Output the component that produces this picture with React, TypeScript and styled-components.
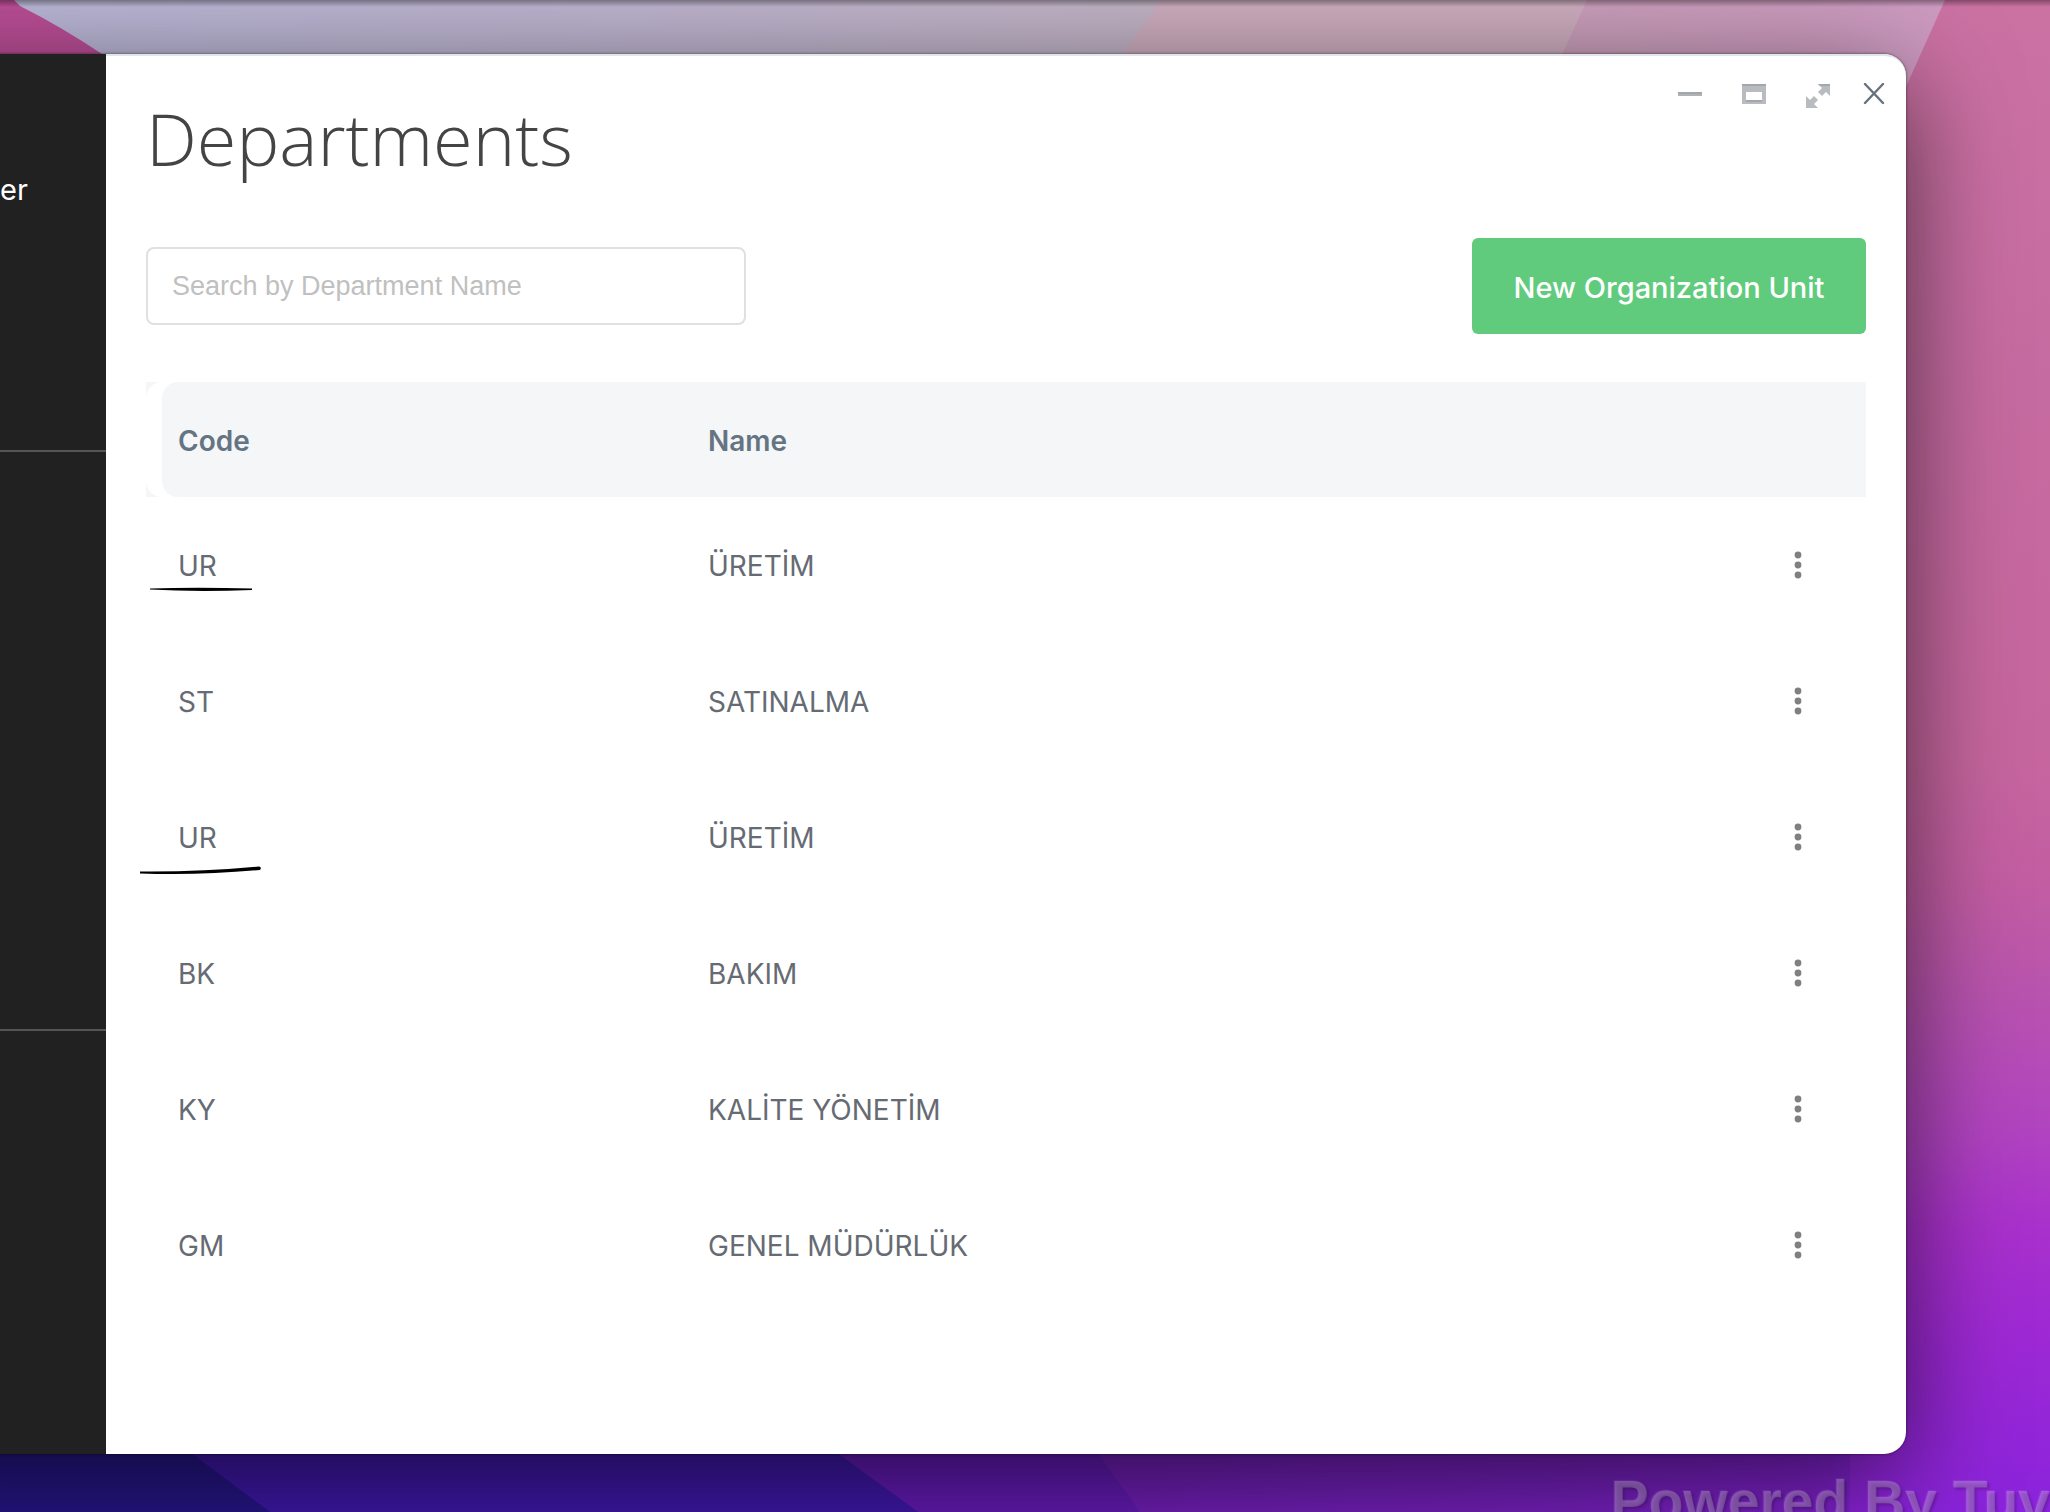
import React, { useState } from "react";
import styled, { createGlobalStyle } from "styled-components";

const GlobalStyle = createGlobalStyle`
  *, *::before, *::after { box-sizing: border-box; }
  body { margin: 0; font-family: Inter, "Open Sans", sans-serif; background: #4f189c; }
  button, input { font-family: inherit; }
`;

const Desktop = styled.div`
  position: relative;
  display: flex;
  flex-direction: column;
  min-height: 100vh;
  padding-top: 54px;
  overflow: hidden;
  isolation: isolate;
`;

const Wallpaper = styled.svg`
  position: absolute;
  inset: 0;
  z-index: -1;
  width: 100%;
  height: 100%;
`;

const AppWindow = styled.div`
  display: flex;
  flex: 1;
  margin: 0 144px 0 -120px;
  border-radius: 0 22px 22px 0;
  background: #ffffff;
  box-shadow: 0 0 3px rgba(0, 0, 0, 0.55), 0 28px 108px rgba(0, 0, 0, 0.62);
`;

const Sidebar = styled.aside`
  flex: none;
  width: 226px;
  background: #212121;
`;

const SidebarSection = styled.div<{ $height: number }>`
  height: ${(p) => p.$height}px;
  padding: 116px 0 0 120px;
  border-bottom: 2px solid #555558;
`;

const SidebarLabel = styled.span`
  display: block;
  color: #ffffff;
  font-size: 29px;
  line-height: 40px;
`;

const Main = styled.main`
  display: flex;
  flex: 1;
  flex-direction: column;
  min-width: 0;
  border-top: 2px solid #dfe6ec;
  border-radius: 0 22px 22px 0;
`;

const Header = styled.header`
  display: flex;
  align-items: flex-start;
  justify-content: space-between;
  padding: 10px 8px 0 40px;
`;

const Title = styled.h1`
  margin: 28px 0 0;
  color: #444444;
  font-family: "Open Sans", Lato, sans-serif;
  font-size: 72px;
  font-weight: 300;
  line-height: 88px;
`;

const WindowControls = styled.div`
  display: flex;
`;

const ControlButton = styled.button<{ $width: number }>`
  display: flex;
  align-items: center;
  justify-content: center;
  width: ${(p) => p.$width}px;
  height: 56px;
  padding: 0;
  border: 0;
  background: none;
  cursor: pointer;
`;

const Toolbar = styled.div`
  display: flex;
  align-items: center;
  justify-content: space-between;
  margin: 56px 40px 48px;
`;

const SearchInput = styled.input`
  width: 600px;
  height: 78px;
  padding: 0 24px;
  border: 2px solid #e0e0e0;
  border-radius: 8px;
  background: #ffffff;
  color: #444444;
  font-family: "Liberation Sans", sans-serif;
  font-size: 27px;

  &::placeholder {
    color: #c0c0c0;
    opacity: 1;
  }
`;

const PrimaryButton = styled.button`
  min-width: 394px;
  height: 96px;
  padding: 2px 40px 0;
  border: 0;
  border-radius: 6px;
  background: #61cb7d;
  color: #ffffff;
  font-size: 29px;
  font-weight: 500;
  cursor: pointer;
`;

const TableArea = styled.div`
  padding: 0 40px;
`;

const Table = styled.table`
  width: 100%;
  border-spacing: 0;
  table-layout: fixed;
  color: #666b73;
  font-size: 28px;
  text-align: left;
`;

const CodeCol = styled.col`
  width: 546px;
`;

const ActionCol = styled.col`
  width: 136px;
`;

const HeadCell = styled.th`
  height: 115px;
  padding: 2px 16px 0;
  background: #f4f6f8;
  color: #647483;
  font-weight: 600;
`;

const FirstHeadCell = styled(HeadCell)`
  padding: 0;
`;

const HeadInset = styled.div`
  padding-left: 16px;
  border-radius: 16px 0 0 16px;
  background: #ffffff;
`;

const HeadFill = styled.div`
  display: flex;
  align-items: center;
  height: 115px;
  padding: 2px 16px 0;
  border-radius: 16px 0 0 16px;
  background: #f4f6f8;
`;

const Cell = styled.td`
  position: relative;
  height: 136px;
  padding: 2px 16px 0;
`;

const CodeCell = styled(Cell)`
  padding-left: 32px;
`;

const ActionCell = styled(Cell)`
  padding-top: 0;
`;

const PenStroke = styled.svg`
  position: absolute;
  top: 84px;
  left: -10px;
  pointer-events: none;
`;

const RowMenuButton = styled.button`
  display: flex;
  align-items: center;
  justify-content: center;
  width: 48px;
  height: 48px;
  margin: 0 auto;
  padding: 0;
  border: 0;
  background: none;
  cursor: pointer;
`;

const Footer = styled.footer`
  position: relative;
  display: flex;
  justify-content: flex-end;
  height: 58px;
  overflow: hidden;
`;

const Watermark = styled.span`
  flex: none;
  padding-top: 15px;
  color: rgba(255, 255, 255, 0.2);
  font-family: "Liberation Sans", sans-serif;
  font-size: 57px;
  font-weight: 700;
  line-height: 64px;
  text-shadow: 2px 2px 3px rgba(0, 0, 0, 0.2), -1px -1px 1px rgba(255, 255, 255, 0.08);
  white-space: nowrap;
`;

type Stroke = "straight" | "rising";

const departments: { code: string; name: string; stroke?: Stroke }[] = [
  { code: "UR", name: "ÜRETİM", stroke: "straight" },
  { code: "ST", name: "SATINALMA" },
  { code: "UR", name: "ÜRETİM", stroke: "rising" },
  { code: "BK", name: "BAKIM" },
  { code: "KY", name: "KALİTE YÖNETİM" },
  { code: "GM", name: "GENEL MÜDÜRLÜK" },
];

const strokePaths: Record<Stroke, string> = {
  straight: "M14 7.5 Q60 6 116 7.5 V9 Q60 11 14 8.5 Z",
  rising: "M4 18.5 Q66 19 123 13.5 Q126 14 124 17 Q66 22.5 4 20.5 Z",
};

const DesktopArt = () => (
  <Wallpaper viewBox="0 0 2050 1512" preserveAspectRatio="none" aria-hidden="true">
    <defs>
      <linearGradient id="side" x1="1980" y1="0" x2="2050" y2="1512" gradientUnits="userSpaceOnUse">
        <stop offset="0" stopColor="#cb72a3" />
        <stop offset="0.25" stopColor="#c66ba1" />
        <stop offset="0.5" stopColor="#c6669e" />
        <stop offset="0.58" stopColor="#c35ea2" />
        <stop offset="0.66" stopColor="#b853af" />
        <stop offset="0.75" stopColor="#b143c1" />
        <stop offset="0.81" stopColor="#a931cc" />
        <stop offset="0.88" stopColor="#9e29d4" />
        <stop offset="1" stopColor="#8a23dc" />
      </linearGradient>
      <linearGradient id="top" x1="0" y1="0" x2="1160" y2="0" gradientUnits="userSpaceOnUse">
        <stop offset="0" stopColor="#b9b6d6" />
        <stop offset="0.55" stopColor="#beb4cf" />
        <stop offset="1" stopColor="#c1b3c5" />
      </linearGradient>
      <linearGradient id="upper" x1="1560" y1="0" x2="1945" y2="0" gradientUnits="userSpaceOnUse">
        <stop offset="0" stopColor="#ca9fbb" />
        <stop offset="1" stopColor="#ce9ac1" />
      </linearGradient>
      <linearGradient id="lower" x1="1080" y1="0" x2="2050" y2="0" gradientUnits="userSpaceOnUse">
        <stop offset="0" stopColor="#721fba" />
        <stop offset="0.5" stopColor="#7a21c4" />
        <stop offset="1" stopColor="#8a23dc" />
      </linearGradient>
      <linearGradient id="edge" x1="0" y1="0" x2="0" y2="1">
        <stop offset="0" stopColor="#000000" stopOpacity="0.35" />
        <stop offset="1" stopColor="#000000" stopOpacity="0" />
      </linearGradient>
    </defs>
    <rect width="2050" height="1512" fill="url(#side)" />
    <path d="M0 0H1945L1900 100H0Z" fill="url(#upper)" />
    <path d="M0 0H1587L1555 70H0Z" fill="#cdadbf" />
    <path d="M0 0H1160L1112 70H0Z" fill="url(#top)" />
    <path d="M0 0H14L20 6Q60 26 102 54H0Z" fill="#ba4e96" />
    <path d="M1050 1400H1850V1512H1140Z" fill="url(#lower)" />
    <path d="M0 1400H1060L1140 1512H0Z" fill="#661bba" />
    <path d="M0 1400H765L918 1512H0Z" fill="#4018ac" />
    <path d="M0 1400H120L270 1512H0Z" fill="#27168a" />
    <rect width="2050" height="7" fill="url(#edge)" />
  </Wallpaper>
);

const MinimizeIcon = () => (
  <svg width="24" height="24" viewBox="0 0 24 24" aria-hidden="true">
    <path d="M0 10h24v4H0z" fill="#b0b3b6" />
    <path d="M0 10h24v2H0z" fill="#a4a6a9" />
  </svg>
);

const RestoreIcon = () => (
  <svg width="24" height="24" viewBox="0 0 24 24" aria-hidden="true">
    <path d="M0 2h24v20H0zM4 10v8h16v-8z" fill="#b8bbbf" fillRule="evenodd" />
    <path d="M0 2h24v2H0zM4 18h16v2H4z" fill="#a4a6a9" />
  </svg>
);

const ExpandIcon = () => (
  <svg width="24" height="28" viewBox="0 0 24 28" aria-hidden="true">
    <path
      d="M12 4H24V16L20 12L16 16L14 14L12 12L16 8ZM0 16L4 20L8 16L10 18L12 20L8 24L12 28H0Z"
      fill="#b8bbbf"
    />
    <path d="M12 4h12v2H14z" fill="#a4a6a9" />
  </svg>
);

const CloseIcon = () => (
  <svg width="22" height="22" viewBox="0 0 22 22" aria-hidden="true">
    <path d="M2 1L20 20M20 1L2 20" stroke="#68727d" strokeWidth="2.4" strokeLinecap="round" />
  </svg>
);

const MoreIcon = () => (
  <svg width="8" height="28" viewBox="0 0 8 28" aria-hidden="true" fill="#808080">
    <circle cx="4" cy="4" r="3.4" />
    <circle cx="4" cy="14" r="3.4" />
    <circle cx="4" cy="24" r="3.4" />
  </svg>
);

export default function App() {
  const [query, setQuery] = useState("");
  const rows = departments.filter((d) =>
    d.name.toLocaleLowerCase("tr").includes(query.toLocaleLowerCase("tr"))
  );

  return (
    <>
      <GlobalStyle />
      <Desktop>
        <DesktopArt />
        <AppWindow>
          <Sidebar>
            <SidebarSection $height={398}>
              <SidebarLabel>er</SidebarLabel>
            </SidebarSection>
            <SidebarSection $height={579} />
          </Sidebar>
          <Main>
            <Header>
              <Title>Departments</Title>
              <WindowControls>
                <ControlButton $width={64} aria-label="Minimize">
                  <MinimizeIcon />
                </ControlButton>
                <ControlButton $width={64} aria-label="Restore">
                  <RestoreIcon />
                </ControlButton>
                <ControlButton $width={64} aria-label="Full screen">
                  <ExpandIcon />
                </ControlButton>
                <ControlButton $width={48} aria-label="Close">
                  <CloseIcon />
                </ControlButton>
              </WindowControls>
            </Header>
            <Toolbar>
              <SearchInput
                type="text"
                aria-label="Search by Department Name"
                placeholder="Search by Department Name"
                value={query}
                onChange={(e) => setQuery(e.target.value)}
              />
              <PrimaryButton type="button">New Organization Unit</PrimaryButton>
            </Toolbar>
            <TableArea>
              <Table>
                <colgroup>
                  <CodeCol />
                  <col />
                  <ActionCol />
                </colgroup>
                <thead>
                  <tr>
                    <FirstHeadCell scope="col">
                      <HeadInset>
                        <HeadFill>Code</HeadFill>
                      </HeadInset>
                    </FirstHeadCell>
                    <HeadCell scope="col">Name</HeadCell>
                    <HeadCell as="td" />
                  </tr>
                </thead>
                <tbody>
                  {rows.map((d, i) => (
                    <tr key={i}>
                      <CodeCell>
                        {d.code}
                        {d.stroke && (
                          <PenStroke width="130" height="28" viewBox="0 0 130 28" aria-hidden="true">
                            <path d={strokePaths[d.stroke]} fill="#000000" />
                          </PenStroke>
                        )}
                      </CodeCell>
                      <Cell>{d.name}</Cell>
                      <ActionCell>
                        <RowMenuButton type="button" aria-label={`Actions for ${d.name}`}>
                          <MoreIcon />
                        </RowMenuButton>
                      </ActionCell>
                    </tr>
                  ))}
                </tbody>
              </Table>
            </TableArea>
          </Main>
        </AppWindow>
        <Footer>
          <Watermark>Powered By Tuv</Watermark>
        </Footer>
      </Desktop>
    </>
  );
}
